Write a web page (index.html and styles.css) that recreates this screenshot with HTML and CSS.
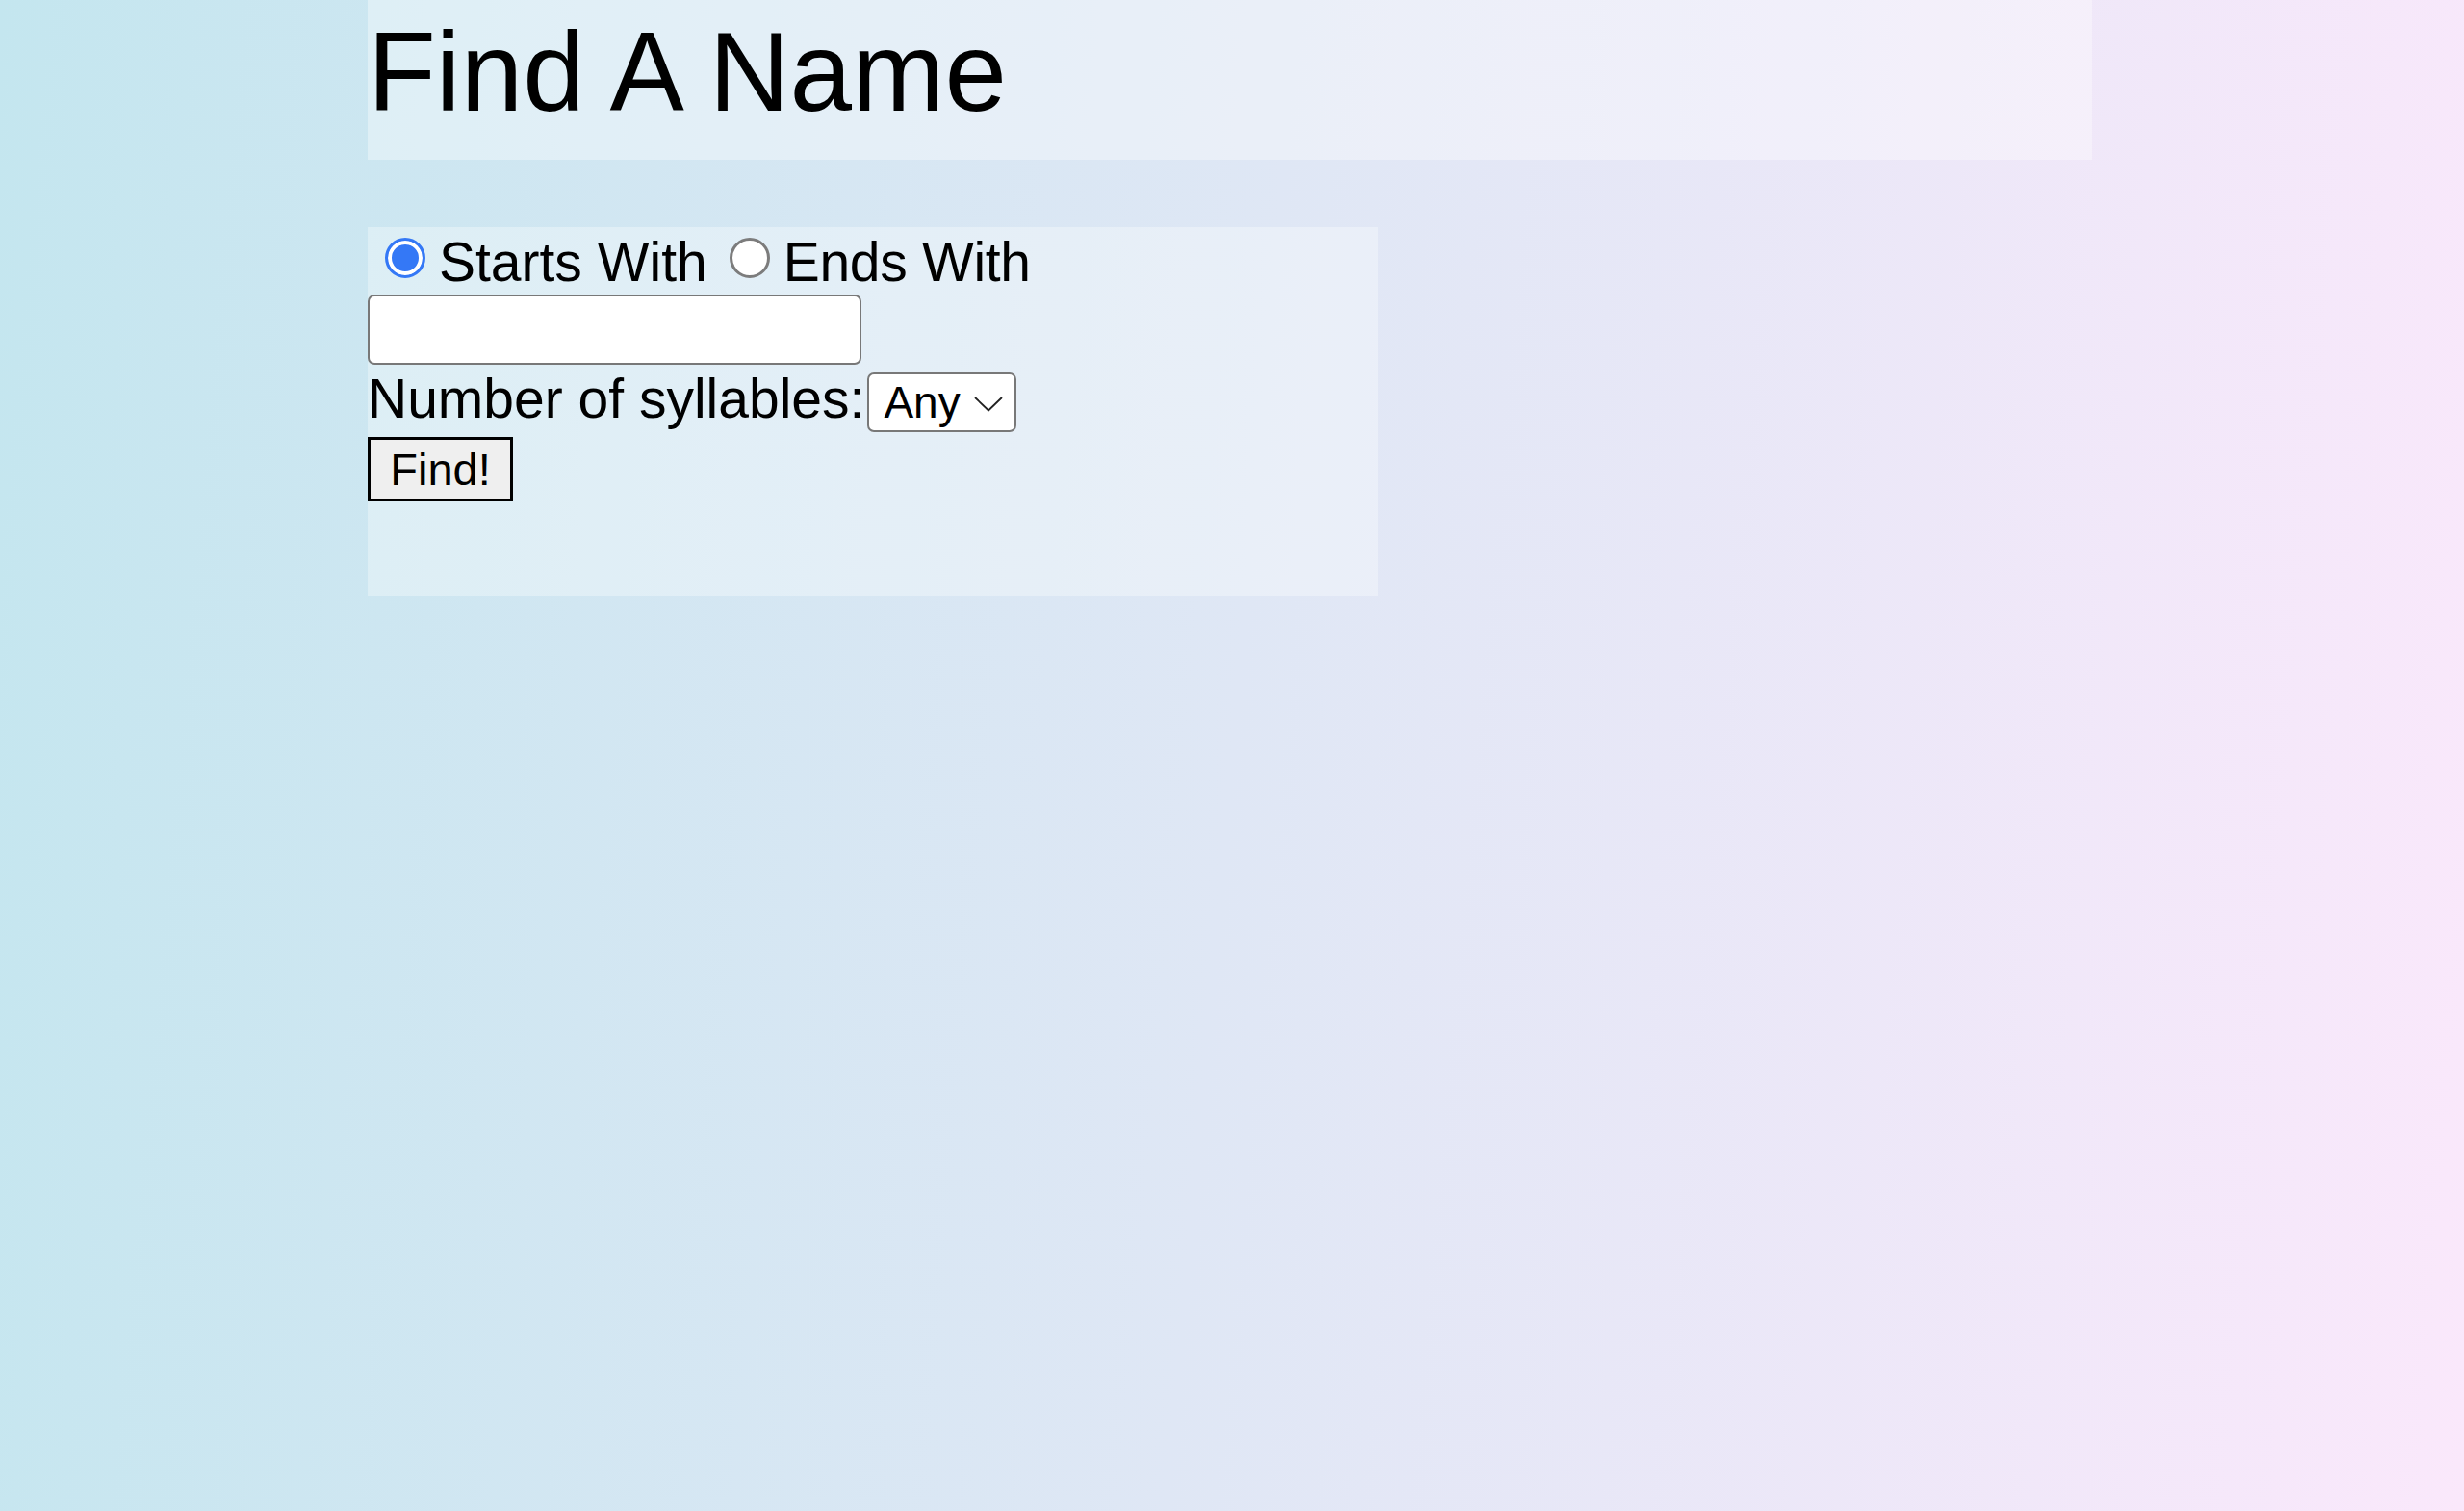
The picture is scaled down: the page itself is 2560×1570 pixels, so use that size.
FILE: index.html
```html
<!DOCTYPE html>
<html lang="en">
<head>
<meta charset="utf-8">
<title>Find A Name</title>
<link rel="stylesheet" href="styles.css">
</head>
<body>
<main class="page">
  <header class="title-box">
    <h1 class="title">Find A Name</h1>
  </header>
  <form class="finder">
    <div class="mode-row">
      <input class="radio" type="radio" name="mode" id="starts" checked>
      <label class="mode-label" for="starts">Starts With</label>
      <input class="radio radio-second" type="radio" name="mode" id="ends">
      <label class="mode-label" for="ends">Ends With</label>
    </div>
    <input class="name-input" type="text" aria-label="Name fragment">
    <div class="syllable-row">
      <label class="syllable-label" for="syll">Number of syllables:</label>
      <span class="select-wrap">
        <select class="syllable-select" id="syll">
          <option>Any</option>
          <option>1</option>
          <option>2</option>
          <option>3</option>
          <option>4</option>
        </select>
        <svg class="chevron" width="30" height="16" viewBox="0 0 30 16" aria-hidden="true">
          <path d="M1.5 1.5 L15 14.5 L28.5 1.5" fill="none" stroke="#222" stroke-width="1.8" stroke-linecap="round" stroke-linejoin="round"/>
        </svg>
      </span>
    </div>
    <button class="find-btn" type="button">Find!</button>
  </form>
</main>
</body>
</html>
```

FILE: styles.css
```css
html, body {
  margin: 0;
  padding: 0;
}

body {
  min-height: 1570px;
  background: linear-gradient(95deg, #c4e6ef 0%, #dfe7f5 50%, #fae8fb 100%);
  font-family: "Liberation Sans", Arial, Helvetica, sans-serif;
  color: #000;
}

.page {
  margin-left: 382px;
  width: 1792px;
}

.title-box {
  height: 166px;
  box-sizing: border-box;
  background: rgba(255, 255, 255, 0.36);
}

.title {
  margin: 0;
  font-size: 116px;
  font-weight: 400;
  line-height: 150px;
}

.finder {
  margin-top: 70px;
  width: 1050px;
  height: 383px;
  box-sizing: border-box;
  background: rgba(255, 255, 255, 0.32);
  display: flex;
  flex-direction: column;
  align-items: flex-start;
}

.mode-row {
  display: flex;
  align-items: center;
  padding-top: 2px;
  height: 68px;
  line-height: 68px;
  font-size: 57px;
}

.radio {
  appearance: none;
  -webkit-appearance: none;
  margin: 0 0 9px 0;
  width: 42px;
  height: 42px;
  box-sizing: border-box;
  border-radius: 50%;
  border: 3px solid #7c7c7c;
  background: #fff;
  flex: none;
}

.radio:checked {
  border-color: #3478f6;
  background: #3478f6;
  box-shadow: inset 0 0 0 4px #fff;
}

.radio:first-child {
  margin-left: 18px;
}

.radio-second {
  margin-left: 23px;
}

.mode-label {
  margin-left: 14px;
}

.mode-label:last-child {
  letter-spacing: -0.3px;
}

.name-input {
  width: 513px;
  height: 73px;
  box-sizing: border-box;
  margin: 0;
  border: 2px solid #787878;
  border-radius: 7px;
  background: #fff;
  font-family: inherit;
  font-size: 46px;
  padding: 0 10px;
  outline: none;
}

.syllable-row {
  display: flex;
  align-items: flex-start;
  margin-top: 8px;
}

.syllable-label {
  font-size: 57px;
  line-height: 54px;
}

.select-wrap {
  position: relative;
  display: block;
  margin-left: 3px;
}

.syllable-select {
  appearance: none;
  -webkit-appearance: none;
  display: block;
  width: 155px;
  height: 62px;
  box-sizing: border-box;
  margin: 0;
  border: 2px solid #787878;
  border-radius: 7px;
  background: #fff;
  color: #000;
  font-family: inherit;
  font-size: 46px;
  line-height: 58px;
  padding: 0 0 0 15px;
}

.chevron {
  position: absolute;
  left: 111px;
  top: 25px;
  pointer-events: none;
}

.find-btn {
  margin-top: 5px;
  width: 151px;
  height: 67px;
  box-sizing: border-box;
  border: 3px solid #000;
  border-radius: 0;
  background: #efefef;
  color: #000;
  font-family: inherit;
  font-size: 47px;
  line-height: 61px;
  padding: 0;
}
```
